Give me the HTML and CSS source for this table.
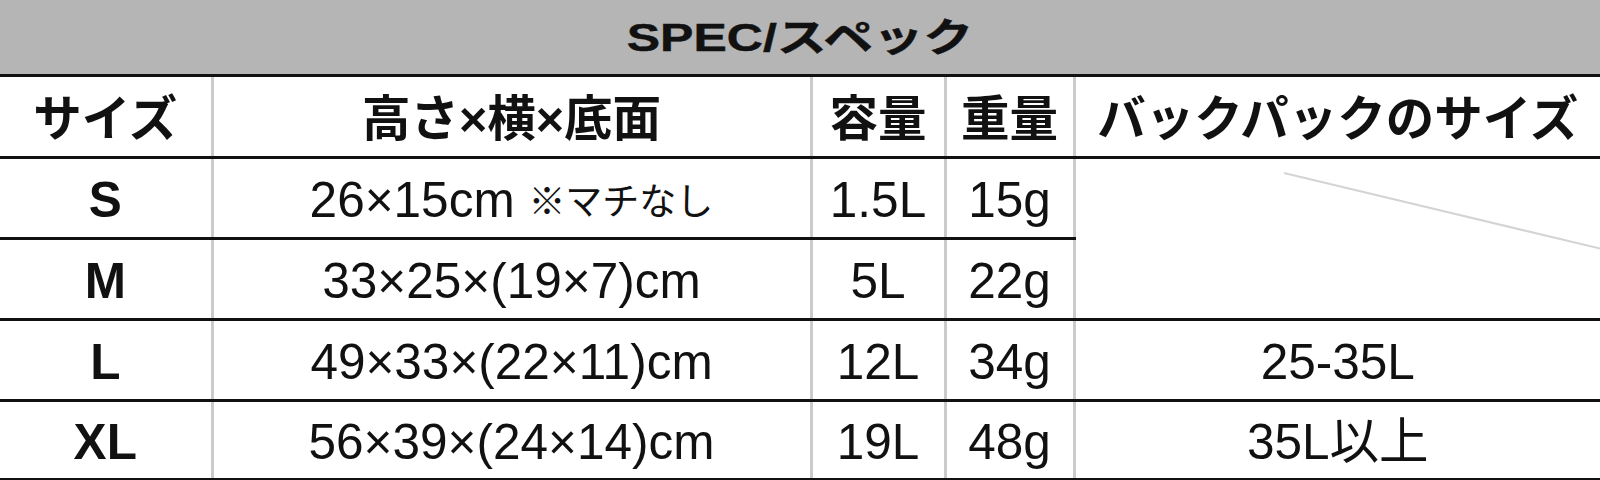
FILE: index.html
```html
<!DOCTYPE html>
<html lang="ja">
<head>
<meta charset="utf-8">
<title>SPEC/スペック</title>
<link rel="stylesheet" href="styles.css">
</head>
<body>
<table class="spec">
  <colgroup>
    <col class="c-size">
    <col class="c-dim">
    <col class="c-vol">
    <col class="c-wt">
    <col class="c-bp">
  </colgroup>
  <thead>
    <tr class="title-row">
      <th colspan="5" class="title"><span class="title-text">SPEC/スペック</span></th>
    </tr>
    <tr class="head-row">
      <th>サイズ</th>
      <th>高さ×横×底面</th>
      <th>容量</th>
      <th>重量</th>
      <th>バックパックのサイズ</th>
    </tr>
  </thead>
  <tbody>
    <tr>
      <td class="size">S</td>
      <td>26×15cm <span class="note">※マチなし</span></td>
      <td>1.5L</td>
      <td>15g</td>
      <td rowspan="2" class="na">
        <svg class="slash" aria-hidden="true"><line x1="208" y1="14" x2="530" y2="91"/></svg>
      </td>
    </tr>
    <tr>
      <td class="size">M</td>
      <td>33×25×(19×7)cm</td>
      <td>5L</td>
      <td>22g</td>
    </tr>
    <tr>
      <td class="size">L</td>
      <td>49×33×(22×11)cm</td>
      <td>12L</td>
      <td>34g</td>
      <td>25-35L</td>
    </tr>
    <tr class="last">
      <td class="size">XL</td>
      <td>56×39×(24×14)cm</td>
      <td>19L</td>
      <td>48g</td>
      <td>35L以上</td>
    </tr>
  </tbody>
</table>
</body>
</html>
```

FILE: styles.css
```css
html, body {
  margin: 0;
  padding: 0;
  background: #ffffff;
}

body {
  font-family: "Liberation Sans", "Noto Sans CJK JP", sans-serif;
  color: #111111;
}

.spec {
  width: 1600px;
  table-layout: fixed;
  border-collapse: collapse;
  border-spacing: 0;
}

.c-size { width: 212px; }
.c-dim { width: 599px; }
.c-vol { width: 134px; }
.c-wt { width: 129px; }
.c-bp { width: 526px; }

.spec th,
.spec td {
  padding: 0;
  text-align: center;
  vertical-align: middle;
  border-bottom: 3px solid #111111;
  border-left: 3px solid #cbcbcb;
  white-space: nowrap;
  line-height: 1;
}

.spec th:first-child,
.spec td:first-child {
  border-left: none;
}

.title-row th.title {
  height: 72px;
  padding-top: 2px;
  background: #b5b5b5;
  border-left: none;
  font-size: 50px;
  font-weight: 700;
}

.title-text {
  display: inline-block;
  transform: scaleY(0.78);
  -webkit-text-stroke: 0.6px #111111;
}

.head-row th {
  height: 74px;
  padding-top: 5px;
  font-size: 48.5px;
  font-weight: 700;
}

.spec tbody td {
  height: 74px;
  padding-top: 4px;
  font-size: 49.5px;
  font-weight: 400;
}

.spec tbody tr.last td {
  height: 72px;
}

.spec tbody td.size {
  font-weight: 700;
}

.note {
  font-family: "Noto Sans CJK JP", sans-serif;
  font-size: 37px;
  vertical-align: 2px;
}

.spec td.na {
  position: relative;
  padding: 0;
}

.slash {
  position: absolute;
  left: 0;
  top: 0;
  width: 100%;
  height: 100%;
  overflow: hidden;
}

.slash line {
  stroke: #d4d4d4;
  stroke-width: 2;
}
```
